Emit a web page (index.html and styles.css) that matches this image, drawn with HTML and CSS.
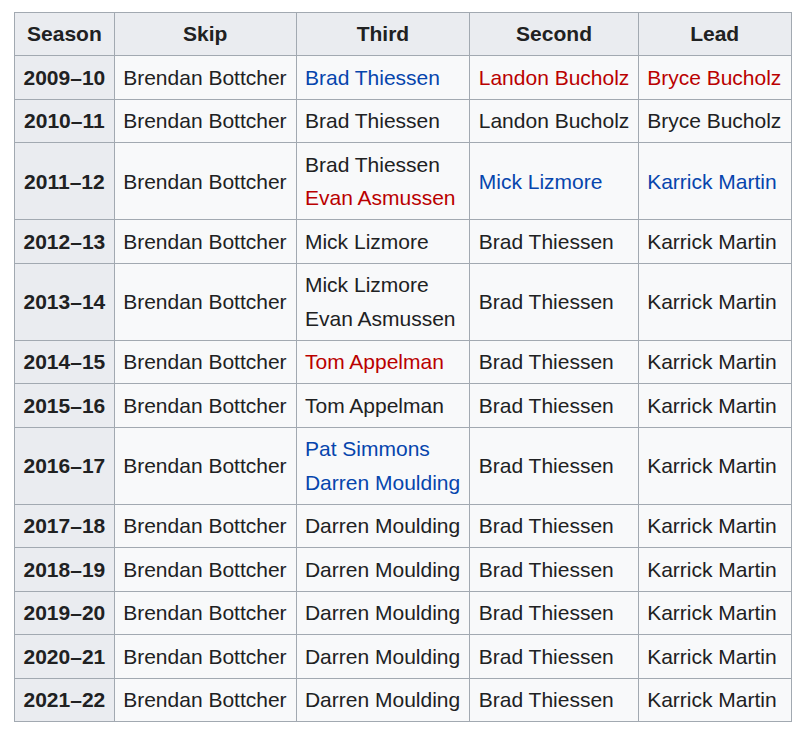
FILE: index.html
```html
<!DOCTYPE html>
<html>
<head>
<meta charset="utf-8">
<link rel="stylesheet" href="styles.css">
</head>
<body>
<table class="wikitable">
<thead>
<tr><th class="c-season">Season</th><th class="c-skip">Skip</th><th class="c-third">Third</th><th class="c-second">Second</th><th class="c-lead">Lead</th></tr>
</thead>
<tbody>
<tr><th>2009–10</th><td>Brendan Bottcher</td><td><a class="link">Brad Thiessen</a></td><td><a class="new">Landon Bucholz</a></td><td><a class="new">Bryce Bucholz</a></td></tr>
<tr><th>2010–11</th><td>Brendan Bottcher</td><td>Brad Thiessen</td><td>Landon Bucholz</td><td>Bryce Bucholz</td></tr>
<tr><th>2011–12</th><td>Brendan Bottcher</td><td>Brad Thiessen<br><a class="new">Evan Asmussen</a></td><td><a class="link">Mick Lizmore</a></td><td><a class="link">Karrick Martin</a></td></tr>
<tr><th>2012–13</th><td>Brendan Bottcher</td><td>Mick Lizmore</td><td>Brad Thiessen</td><td>Karrick Martin</td></tr>
<tr><th>2013–14</th><td>Brendan Bottcher</td><td>Mick Lizmore<br>Evan Asmussen</td><td>Brad Thiessen</td><td>Karrick Martin</td></tr>
<tr><th>2014–15</th><td>Brendan Bottcher</td><td><a class="new">Tom Appelman</a></td><td>Brad Thiessen</td><td>Karrick Martin</td></tr>
<tr><th>2015–16</th><td>Brendan Bottcher</td><td>Tom Appelman</td><td>Brad Thiessen</td><td>Karrick Martin</td></tr>
<tr><th>2016–17</th><td>Brendan Bottcher</td><td><a class="link">Pat Simmons</a><br><a class="link">Darren Moulding</a></td><td>Brad Thiessen</td><td>Karrick Martin</td></tr>
<tr><th>2017–18</th><td>Brendan Bottcher</td><td>Darren Moulding</td><td>Brad Thiessen</td><td>Karrick Martin</td></tr>
<tr><th>2018–19</th><td>Brendan Bottcher</td><td>Darren Moulding</td><td>Brad Thiessen</td><td>Karrick Martin</td></tr>
<tr><th>2019–20</th><td>Brendan Bottcher</td><td>Darren Moulding</td><td>Brad Thiessen</td><td>Karrick Martin</td></tr>
<tr><th>2020–21</th><td>Brendan Bottcher</td><td>Darren Moulding</td><td>Brad Thiessen</td><td>Karrick Martin</td></tr>
<tr><th>2021–22</th><td>Brendan Bottcher</td><td>Darren Moulding</td><td>Brad Thiessen</td><td>Karrick Martin</td></tr>
</tbody>
</table>
</body>
</html>
```

FILE: styles.css
```css
html, body {
  margin: 0;
  padding: 0;
  background: #ffffff;
}
body {
  padding: 12px 14px;
  font-family: "Liberation Sans", Arial, sans-serif;
  font-size: 21px;
  line-height: 1.6;
  color: #202122;
}
.wikitable {
  border-collapse: collapse;
  border: 1px solid #a2a9b1;
  background: #f8f9fa;
  color: #202122;
}
.wikitable th,
.wikitable td {
  border: 1px solid #a2a9b1;
  padding: 4.45px 8.4px;
  text-align: left;
  vertical-align: middle;
  white-space: nowrap;
}
.wikitable th {
  background: #eaecf0;
  text-align: center;
  font-weight: bold;
}
.c-season { width: 82px; }
.c-skip { width: 164px; }
.c-third { width: 156px; }
.c-second { width: 150px; }
.c-lead { width: 135px; }
.link {
  color: #0645ad;
  text-decoration: none;
}
.new {
  color: #ba0000;
  text-decoration: none;
}
```
